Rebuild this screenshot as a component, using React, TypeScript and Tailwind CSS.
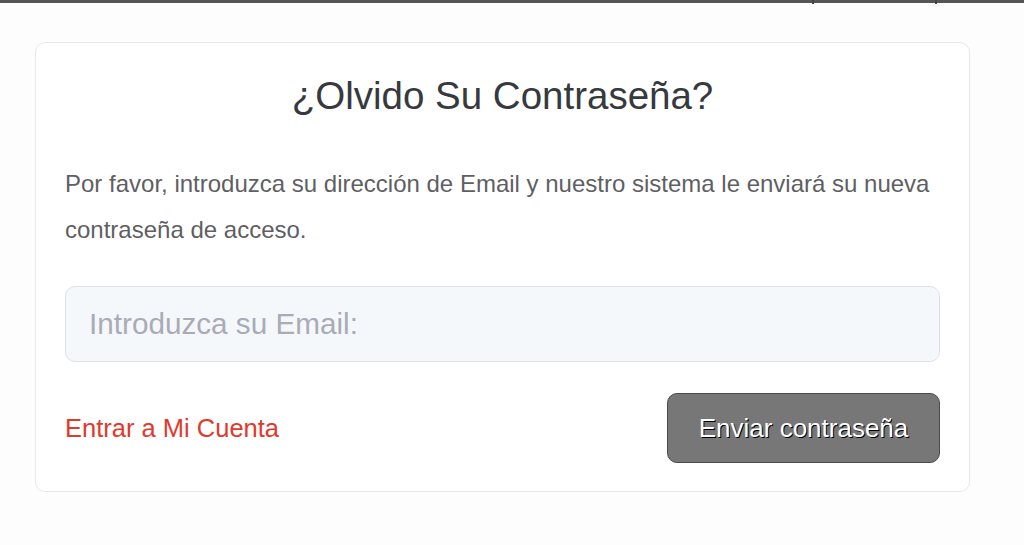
export default function App() {
  return (
    <div className="min-h-[545px] bg-[#fdfdfd] font-['Liberation_Sans',Arial,sans-serif]">
      <div className="relative h-[3px] bg-[#555]">
        <div className="absolute left-[812px] top-0 h-[4px] w-[2px] bg-[#444]" />
        <div className="absolute left-[935px] top-0 h-[4px] w-[2px] bg-[#444]" />
      </div>
      <div className="ml-[35px] mt-[39px] w-[935px] rounded-[10px] border border-[#e8e9ee] bg-white px-[29px] pb-[28px] pt-[27px]">
        <h1 className="text-center text-[38.5px] leading-[52px] text-[#36393d]">¿Olvido Su Contraseña?</h1>
        <p className="mt-[39px] text-[24px] leading-[46px] text-[#5f5f63]">
          Por favor, introduzca su dirección de Email y nuestro sistema le enviará su nueva contraseña de acceso.
        </p>
        <input
          type="email"
          placeholder="Introduzca su Email:"
          className="mt-[33px] block h-[76px] w-full rounded-[10px] border border-[#dde2e8] bg-[#f5f8fb] px-[23px] text-[29.7px] text-[#333] outline-none placeholder:text-[#a9abb7]"
        />
        <div className="mt-[31px] flex items-center justify-between">
          <a href="#" className="text-[25.5px] text-[#e2392d]">Entrar a Mi Cuenta</a>
          <button className="h-[70px] w-[273px] rounded-[10px] border border-[#4a4a4a] bg-[#777] text-[26px] text-white [text-shadow:1px_1px_0_#000]">
            Enviar contraseña
          </button>
        </div>
      </div>
    </div>
  );
}
